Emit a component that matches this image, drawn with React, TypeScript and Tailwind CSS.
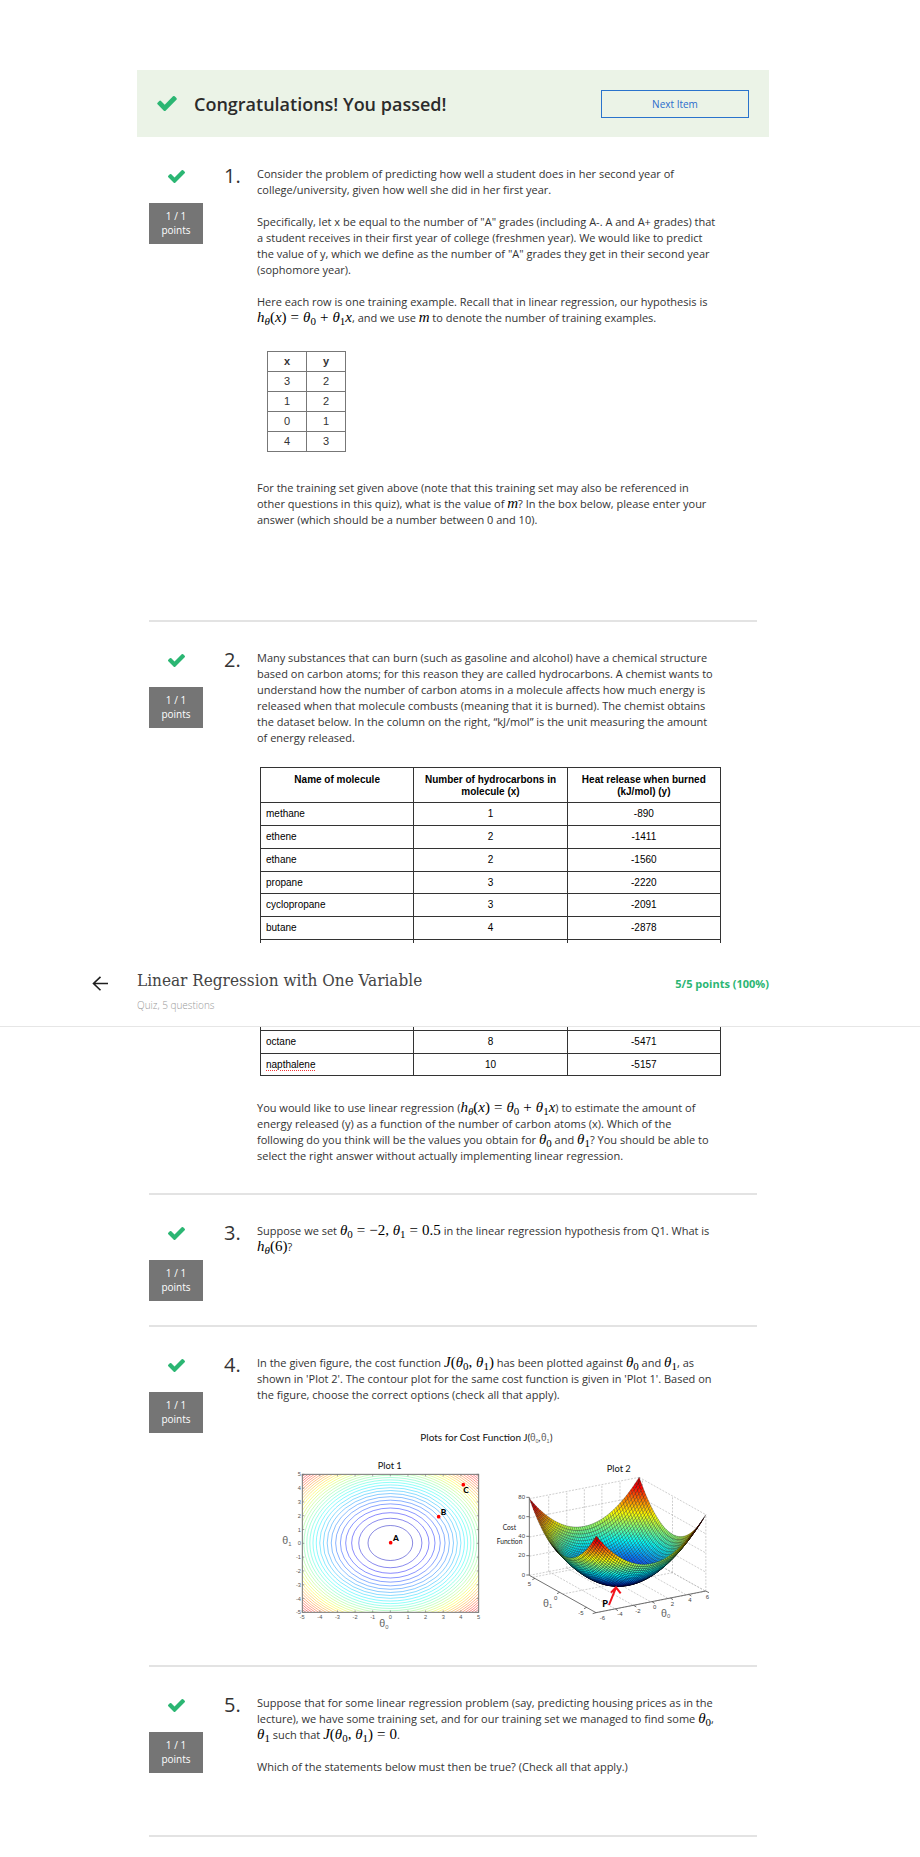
import React from "react";

function Check({ className }: { className: string }) {
  return (
    <svg viewBox="121 334 1550 1188" className={className} fill="#2bb673" aria-hidden="true">
      <path d="M1671 566q0 40-28 68l-724 724-136 136q-28 28-68 28t-68-28l-136-136-362-362q-28-28-28-68t28-68l136-136q28-28 68-28t68 28l294 295 656-657q28-28 68-28t68 28l136 136q28 28 28 68z" />
    </svg>
  );
}

/* ---------- inline formulas ---------- */

function M({ children }: { children: React.ReactNode }) {
  return (
    <span className="whitespace-nowrap font-['Liberation_Serif',serif] text-[15px] leading-[12px] text-black">
      {children}
    </span>
  );
}
const Sub = ({ children }: { children: React.ReactNode }) => (
  <sub className="bottom-auto align-[-3px] text-[11px] leading-[0px]">{children}</sub>
);
const Op = ({ children }: { children: React.ReactNode }) => <span className="mx-1">{children}</span>;
const T0 = () => (
  <>
    <i>θ</i>
    <Sub>0</Sub>
  </>
);
const T1 = () => (
  <>
    <i>θ</i>
    <Sub>1</Sub>
  </>
);
const H = () => (
  <>
    <i>h</i>
    <Sub>
      <i>θ</i>
    </Sub>
  </>
);
const Hypothesis = () => (
  <M>
    <H />(<i>x</i>)<Op>=</Op>
    <T0 />
    <Op>+</Op>
    <T1 />
    <i>x</i>
  </M>
);

/* ---------- cost function figure ---------- */

function jet(t: number) {
  const c = (x: number) => Math.round(255 * Math.max(0, Math.min(1, x)));
  return `rgb(${c(1.5 - Math.abs(4 * t - 3))},${c(1.5 - Math.abs(4 * t - 2))},${c(1.5 - Math.abs(4 * t - 1))})`;
}

const CX = 1082;
const CY = 490;
const HT = 230;
function project(u: number, v: number, z: number): [number, number] {
  return [CX + u * 164.5 - v * 100, CY - u * 32 - v * 56 - z * HT];
}
const surf = (u: number, v: number) => project(u, v, (u * u + v * v) / 2);

function Surface() {
  const n = 52;
  const faces: React.ReactNode[] = [];
  for (let i = n - 1; i >= 0; i--) {
    for (let j = n - 1; j >= 0; j--) {
      const u0 = -1 + (2 * j) / n;
      const u1 = -1 + (2 * (j + 1)) / n;
      const v0 = -1 + (2 * i) / n;
      const v1 = -1 + (2 * (i + 1)) / n;
      const pts = [surf(u0, v0), surf(u1, v0), surf(u1, v1), surf(u0, v1)];
      const um = (u0 + u1) / 2;
      const vm = (v0 + v1) / 2;
      faces.push(
        <polygon
          key={`${i}-${j}`}
          points={pts.map((p) => p.map((c) => c.toFixed(1)).join(",")).join(" ")}
          fill={jet(0.08 + (0.89 * (um * um + vm * vm)) / 2)}
        />
      );
    }
  }
  return (
    <g stroke="#000" strokeOpacity="0.7" strokeWidth="1.1" strokeLinejoin="round">
      {faces}
    </g>
  );
}

function seg(a: [number, number], b: [number, number], key: string) {
  return <line key={key} x1={a[0]} y1={a[1]} x2={b[0]} y2={b[1]} />;
}

function Walls() {
  const lines: React.ReactNode[] = [];
  [0, 0.25, 0.5, 0.75, 1].forEach((z) => {
    lines.push(seg(project(-1, 1, z), project(1, 1, z), `a${z}`));
    lines.push(seg(project(1, 1, z), project(1, -1, z), `b${z}`));
  });
  [-0.65, -0.32, 0, 0.32, 0.65, 1].forEach((u) => {
    lines.push(seg(project(u, 1, 0), project(u, 1, 1), `c${u}`));
    lines.push(seg(project(u, 1, 0), project(u, -1, 0), `d${u}`));
  });
  [-1, 0, 0.9].forEach((v) => {
    lines.push(seg(project(1, v, 0), project(1, v, 1), `e${v}`));
    lines.push(seg(project(1, v, 0), project(-1, v, 0), `f${v}`));
  });
  return (
    <g stroke="#b5b5b5" strokeWidth="2" strokeDasharray="6 4">
      {lines}
    </g>
  );
}

const ticks = [-5, -4, -3, -2, -1, 0, 1, 2, 3, 4, 5];

function Theta({ x, y, sub, size }: { x: number; y: number; sub: string; size: number }) {
  return (
    <text x={x} y={y} fontSize={size} fill="#666" className="font-['Liberation_Sans',sans-serif]">
      θ
      <tspan dy="5" fontSize={size * 0.55}>
        {sub}
      </tspan>
    </text>
  );
}

function Figure() {
  return (
    <svg viewBox="0 0 1410 690" className="mt-[17px] block w-full max-w-[470px]" role="img" aria-label="Plots for Cost Function">
      <defs>
        <clipPath id="plot-area">
          <rect x="136" y="163" width="529" height="414" />
        </clipPath>
      </defs>
      <g className="font-['Lato','Open_Sans',sans-serif]" fill="#111" fontSize="28">
        <text x="490" y="64" fontSize="30">Plots for Cost Function J(</text>
        <text x="362" y="148">Plot 1</text>
        <text x="1049" y="157">Plot 2</text>
        <text x="844" y="64">,</text>
        <text x="879" y="64">)</text>
      </g>
      <Theta x={819} y={64} sub="0" size={30} />
      <Theta x={852} y={64} sub="1" size={30} />

      {/* contour plot */}
      <g clipPath="url(#plot-area)" fill="none" strokeWidth="2" strokeOpacity="0.7">
        {Array.from({ length: 30 }, (_, k) => k + 1).map((k) => (
          <ellipse
            key={k}
            cx="400"
            cy="369"
            rx={67 * Math.sqrt(k)}
            ry={52.5 * Math.sqrt(k)}
            stroke={jet(0.03 + (k / 30) * 0.9)}
          />
        ))}
      </g>
      <rect x="136" y="163" width="529" height="414" fill="none" stroke="#777" strokeWidth="3" />
      <g className="font-['Liberation_Sans',sans-serif]" fill="#555" fontSize="17" stroke="none">
        {ticks.map((t) => (
          <g key={t}>
            <text x={400 + t * 52.9} y="596" textAnchor="middle">{t}</text>
            <text x="132" y={376 - t * 41.4} textAnchor="end">{t}</text>
            <path
              d={`M${400 + t * 52.9} 577v-6M${400 + t * 52.9} 163v6M136 ${370 - t * 41.4}h6M665 ${370 - t * 41.4}h-6`}
              stroke="#777"
              strokeWidth="2"
            />
          </g>
        ))}
      </g>
      <Theta x={76} y={373} sub="1" size={32} />
      <Theta x={367} y={622} sub="0" size={32} />
      <g fill="#f00">
        <circle cx="401" cy="368" r="5.5" />
        <circle cx="545" cy="290" r="5.5" />
        <circle cx="619" cy="194" r="5.5" />
      </g>
      <g className="font-['Lato','Open_Sans',sans-serif]" fill="#000" fontSize="25" fontWeight="900">
        <text x="408" y="362">A</text>
        <text x="551" y="286">B</text>
        <text x="619" y="219">C</text>
      </g>

      {/* surface plot */}
      <Walls />
      <Surface />
      <g stroke="#555" strokeWidth="2.5" fill="none">
        <path d="M817 232V466L1017 578L1346 513" />
        <path d="M808 232h9M808 290h9M808 349h9M808 407h9M808 465h9M1346 513l10 5M1017 578l-10 3M1295 523l8 5M1240 534l8 5M1185 545l8 5M1130 556l8 5M1075 567l8 5M989 562l-8 4M908 517l-8 4M834 475l-8 4" />
      </g>
      <g className="font-['Liberation_Sans',sans-serif]" fill="#444" fontSize="18">
        <text x="804" y="237" textAnchor="end">80</text>
        <text x="804" y="296" textAnchor="end">60</text>
        <text x="804" y="354" textAnchor="end">40</text>
        <text x="804" y="412" textAnchor="end">20</text>
        <text x="804" y="470" textAnchor="end">0</text>
        <text x="812" y="498">5</text>
        <text x="891" y="541">0</text>
        <text x="964" y="584">-5</text>
        <text x="1028" y="599">-6</text>
        <text x="1081" y="588">-4</text>
        <text x="1135" y="578">-2</text>
        <text x="1188" y="567">0</text>
        <text x="1241" y="557">2</text>
        <text x="1294" y="547">4</text>
        <text x="1346" y="537">6</text>
      </g>
      <g className="font-['Lato','Open_Sans',sans-serif]" fill="#222" fontSize="20">
        <text x="737" y="331">Cost</text>
        <text x="719" y="372">Function</text>
      </g>
      <Theta x={858} y={560} sub="1" size={32} />
      <Theta x={1212} y={590} sub="0" size={32} />
      <text x="1036" y="560" fontSize="27" fontWeight="900" className="font-['Lato','Open_Sans',sans-serif]">P</text>
      <path d="M1056 555L1077 503M1062 518L1077 502L1091 520" stroke="#f2141c" strokeWidth="6" fill="none" />
    </svg>
  );
}

/* ---------- questions ---------- */

function Question({ n, className, children }: { n: number; className: string; children: React.ReactNode }) {
  return (
    <section className={`mx-3 flex border-b-2 border-[#e3e3e3] pt-7 ${className}`}>
      <div className="flex w-[54px] shrink-0 flex-col items-center pt-1">
        <Check className="h-[13px] w-[17px]" />
        <div className="mt-5 w-full bg-[#757575] pt-1.5 pb-[7px] text-center text-[10px] leading-[14px] text-white">
          1 / 1
          <br />
          points
        </div>
      </div>
      <h2 className="ml-[21px] w-[33px] shrink-0 text-[20px] leading-5 font-normal text-[#333]">{n}.</h2>
      <div className="min-w-0 flex-1">{children}</div>
    </section>
  );
}

const grades = [
  [3, 2],
  [1, 2],
  [0, 1],
  [4, 3],
];

function GradesTable() {
  return (
    <table className="mt-[25px] ml-2.5 border-collapse border border-[#444] text-center font-['Liberation_Sans',sans-serif] text-[11px] leading-[19px] text-[#333]">
      <thead>
        <tr>
          <th className="w-[39px] border border-[#777] p-0">x</th>
          <th className="w-[39px] border border-[#777] p-0">y</th>
        </tr>
      </thead>
      <tbody>
        {grades.map(([x, y], i) => (
          <tr key={i}>
            <td className="border border-[#777] p-0">{x}</td>
            <td className="border border-[#777] p-0">{y}</td>
          </tr>
        ))}
      </tbody>
    </table>
  );
}

const molecules: [string, string, string][] = [
  ["methane", "1", "-890"],
  ["ethene", "2", "-1411"],
  ["ethane", "2", "-1560"],
  ["propane", "3", "-2220"],
  ["cyclopropane", "3", "-2091"],
  ["butane", "4", "-2878"],
  ["", "", ""],
  ["", "", ""],
  ["", "", ""],
  ["", "", ""],
  ["octane", "8", "-5471"],
  ["napthalene", "10", "-5157"],
];

function MoleculeTable() {
  const cell = "border border-[#333] p-0 text-center";
  return (
    <table className="mt-[21px] ml-[3px] w-[461px] table-fixed border-collapse border border-black font-['Liberation_Sans',sans-serif] text-[10px] leading-3 text-black">
      <thead>
        <tr className="h-[35px] align-top">
          <th className="border border-[#333] p-0 pt-1.5">Name of molecule</th>
          <th className="border border-[#333] p-0 pt-1.5">
            Number of hydrocarbons in
            <br />
            molecule (x)
          </th>
          <th className="border border-[#333] p-0 pt-1.5">
            Heat release when burned
            <br />
            (kJ/mol) (y)
          </th>
        </tr>
      </thead>
      <tbody>
        {molecules.map(([name, x, y], i) => (
          <tr key={i} className={i % 4 === 3 ? "h-[22px]" : "h-[23px]"}>
            <td className="border border-[#333] p-0 pl-[5px] text-left">
              {name === "napthalene" ? (
                <span className="underline decoration-[#e33] decoration-dotted underline-offset-2">{name}</span>
              ) : (
                name
              )}
            </td>
            <td className={cell}>{x}</td>
            <td className={cell}>{y}</td>
          </tr>
        ))}
      </tbody>
    </table>
  );
}

function QuizBar() {
  return (
    <header className="absolute inset-x-0 top-[943px] z-10 border-b border-[#e6e6e6] bg-white pr-3.5">
      <div className="relative mx-auto flex h-[83px] max-w-[632px] items-start justify-between">
        <a href="#back" aria-label="Back" className="absolute top-[33px] -left-[45px]">
          <svg viewBox="0 0 16 16" className="size-4" fill="none" stroke="#1f1f1f" strokeWidth="1.6">
            <path d="M16 7.5H1.5M8.5 .8L1.5 7.5l7 6.8" />
          </svg>
        </a>
        <div>
          <h1 className="mt-[25px] font-['DejaVu_Serif_Condensed','DejaVu_Serif',serif] text-[17px] leading-6 text-[#444]">
            Linear Regression with One Variable
          </h1>
          <p className="mt-1.5 text-[10px] leading-[14px] font-light text-[#999]">Quiz, 5 questions</p>
        </div>
        <p className="mt-[33px] text-[11px] leading-4 font-bold text-[#2bb673]">5/5 points (100%)</p>
      </div>
    </header>
  );
}

export default function App() {
  return (
    <div className="relative bg-white pt-[70px] pr-3.5 pb-5 font-['Open_Sans',sans-serif] text-[11px] leading-4 text-[#333]">
      <QuizBar />
      <main className="mx-auto max-w-[632px]">
        <div className="mb-px flex h-[67px] items-center bg-[#ebf3e7] px-5">
          <Check className="h-[15px] w-5" />
          <h2 className="ml-[17px] flex-1 text-[18px] leading-6 font-semibold text-[#2b2b2b]">Congratulations! You passed!</h2>
          <button type="button" className="h-7 w-[148px] border border-[#2a73cc] text-[10px] leading-[14px] text-[#2a6bcc]">
            Next Item
          </button>
        </div>

        <Question n={1} className="pb-[92px]">
          <p>
            Consider the problem of predicting how well a student does in her second year of
            <br />
            college/university, given how well she did in her first year.
          </p>
          <p className="mt-4">
            Specifically, let x be equal to the number of "A" grades (including A-. A and A+ grades) that
            <br />
            a student receives in their first year of college (freshmen year). We would like to predict
            <br />
            the value of y, which we define as the number of "A" grades they get in their second year
            <br />
            (sophomore year).
          </p>
          <p className="mt-4">
            Here each row is one training example. Recall that in linear regression, our hypothesis is
            <br />
            <Hypothesis />, and we use <M><i>m</i></M> to denote the number of training examples.
          </p>
          <GradesTable />
          <p className="mt-7">
            For the training set given above (note that this training set may also be referenced in
            <br />
            other questions in this quiz), what is the value of <M><i>m</i></M>? In the box below, please enter your
            <br />
            answer (which should be a number between 0 and 10).
          </p>
        </Question>

        <Question n={2} className="pb-[29px]">
          <p>
            Many substances that can burn (such as gasoline and alcohol) have a chemical structure
            <br />
            based on carbon atoms; for this reason they are called hydrocarbons. A chemist wants to
            <br />
            understand how the number of carbon atoms in a molecule affects how much energy is
            <br />
            released when that molecule combusts (meaning that it is burned). The chemist obtains
            <br />
            the dataset below. In the column on the right, “kJ/mol” is the unit measuring the amount
            <br />
            of energy released.
          </p>
          <MoleculeTable />
          <p className="mt-6">
            You would like to use linear regression (<Hypothesis />) to estimate the amount of
            <br />
            energy released (y) as a function of the number of carbon atoms (x). Which of the
            <br />
            following do you think will be the values you obtain for <M><T0 /></M> and <M><T1 /></M>? You should be able to
            <br />
            select the right answer without actually implementing linear regression.
          </p>
        </Question>

        <Question n={3} className="pb-6">
          <p>
            Suppose we set{" "}
            <M>
              <T0 />
              <Op>=</Op>−2, <T1 />
              <Op>=</Op>0.5
            </M>{" "}
            in the linear regression hypothesis from Q1. What is
            <br />
            <M><H />(6)</M>?
          </p>
        </Question>

        <Question n={4} className="pb-[15px]">
          <p>
            In the given figure, the cost function{" "}
            <M><i>J</i>(<T0 />, <T1 />)</M> has been plotted against <M><T0 /></M> and <M><T1 /></M>, as
            <br />
            shown in 'Plot 2'. The contour plot for the same cost function is given in 'Plot 1'. Based on
            <br />
            the figure, choose the correct options (check all that apply).
          </p>
          <Figure />
        </Question>

        <Question n={5} className="pb-[60px]">
          <p>
            Suppose that for some linear regression problem (say, predicting housing prices as in the
            <br />
            lecture), we have some training set, and for our training set we managed to find some <M><T0 /></M>,
            <br />
            <M><T1 /></M> such that{" "}
            <M><i>J</i>(<T0 />, <T1 />)<Op>=</Op>0</M>.
          </p>
          <p className="mt-4">Which of the statements below must then be true? (Check all that apply.)</p>
        </Question>
      </main>
    </div>
  );
}
